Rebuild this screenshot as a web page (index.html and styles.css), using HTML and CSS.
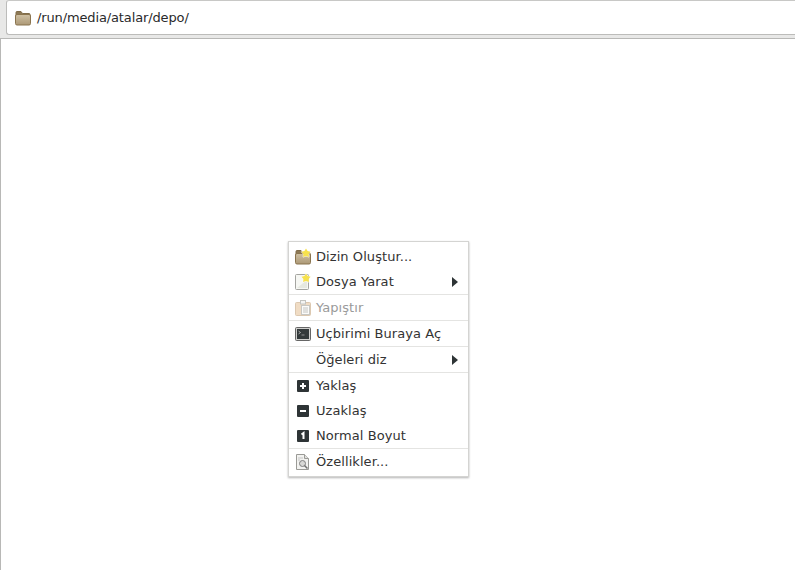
FILE: index.html
```html
<!DOCTYPE html>
<html lang="tr">
<head>
<meta charset="utf-8">
<title>depo</title>
<link rel="stylesheet" href="styles.css">
</head>
<body>
<svg class="defs" width="0" height="0" aria-hidden="true">
  <defs>
    <linearGradient id="folder" x1="0" y1="0" x2="0" y2="1">
      <stop offset="0" stop-color="#cfc1a4"/><stop offset="1" stop-color="#ac9876"/>
    </linearGradient>
    <g id="folder-icon">
      <path d="M1 5V2.5a1 1 0 0 1 1-1h4l1.5 2h6.5a1 1 0 0 1 1 1V6H1z" fill="#8c7855" stroke="#806c4a"/>
      <rect x="0.5" y="4.5" width="15" height="10.5" rx="1.5" fill="url(#folder)" stroke="#8a744e"/>
    </g>
    <g id="star"><path d="M5 .5l1.6 2.6 3 .7-2 2.3.3 3L5 8 2.1 9.1l.3-3-2-2.3 3-.7z" fill="#f7e24e" stroke="#fff" stroke-width=".8" paint-order="stroke"/></g>
  </defs>
</svg>
<header class="location-bar">
  <div class="location-field">
    <svg class="folder" width="16" height="16" viewBox="0 0 16 16"><use href="#folder-icon"/></svg>
    <span class="path">/run/media/atalar/depo/</span>
  </div>
</header>
<main class="file-view">
  <ul class="menu">
    <li class="item">
      <svg class="icon" width="16" height="16" viewBox="0 0 16 16"><use href="#folder-icon"/><use href="#star" x="6" y="-1"/></svg>
      <span>Dizin Oluştur...</span>
    </li>
    <li class="item">
      <svg class="icon" width="16" height="16" viewBox="0 0 16 16"><rect x="0.5" y="0.5" width="13" height="15" rx="1" fill="#f6f7f3" stroke="#a4a4a0"/><path d="M2 14h10V6z" fill="#e6e8e0"/><use href="#star" x="6" y="-1"/></svg>
      <span>Dosya Yarat</span><i class="arrow"></i>
    </li>
    <li class="sep"></li>
    <li class="item disabled">
      <svg class="icon" width="16" height="16" viewBox="0 0 16 16"><rect x="0.5" y="2.5" width="15" height="13" rx="1" fill="#f0dcc4" stroke="#dcc8b0"/><rect x="5.5" y="0.5" width="5" height="3.5" fill="#f4f4f2" stroke="#c4c4c0"/><rect x="6.5" y="5.5" width="8" height="9" fill="#fbfbfa" stroke="#c8c8c4"/><path d="M8 8h5M8 10h5M8 12h5" stroke="#c4c4c0"/></svg>
      <span>Yapıştır</span>
    </li>
    <li class="sep"></li>
    <li class="item">
      <svg class="icon" width="16" height="16" viewBox="0 0 16 16"><rect x="0.5" y="1.5" width="15" height="13" rx="1" fill="#cfcfcd" stroke="#666"/><rect x="2" y="3" width="12" height="10" fill="#33393a"/><path d="M3.5 5l2 1.5-2 1.5" fill="none" stroke="#c8c8c8" stroke-width=".8"/><path d="M6.5 9h3" stroke="#909090"/></svg>
      <span>Uçbirimi Buraya Aç</span>
    </li>
    <li class="sep"></li>
    <li class="item">
      <span class="icon"></span>
      <span>Öğeleri diz</span><i class="arrow"></i>
    </li>
    <li class="sep"></li>
    <li class="item">
      <svg class="icon" width="16" height="16" viewBox="0 0 16 16"><rect x="2" y="2" width="12" height="12" rx="1" fill="#2e3436"/><path d="M5 8h6M8 5v6" stroke="#fff" stroke-width="2"/></svg>
      <span>Yaklaş</span>
    </li>
    <li class="item">
      <svg class="icon" width="16" height="16" viewBox="0 0 16 16"><rect x="2" y="2" width="12" height="12" rx="1" fill="#2e3436"/><path d="M5 8h6" stroke="#fff" stroke-width="2"/></svg>
      <span>Uzaklaş</span>
    </li>
    <li class="item">
      <svg class="icon" width="16" height="16" viewBox="0 0 16 16"><rect x="2" y="2" width="12" height="12" rx="1" fill="#2e3436"/><path d="M6.5 6.5L8.5 5v6" fill="none" stroke="#fff" stroke-width="2"/></svg>
      <span>Normal Boyut</span>
    </li>
    <li class="sep"></li>
    <li class="item">
      <svg class="icon" width="16" height="16" viewBox="0 0 16 16"><path d="M1.5.5h8l4 4v11h-12z" fill="#f2f2f0" stroke="#9a9a96"/><path d="M9.5.5v4h4" fill="#e0e0de" stroke="#9a9a96"/><circle cx="7.5" cy="9.5" r="3" fill="#d8d8d6" stroke="#808080"/><path d="M9.5 11.5l3 3" stroke="#707070" stroke-width="1.5"/><path d="M3 4h5M3 6h2" stroke="#c4c4c4"/></svg>
      <span>Özellikler...</span>
    </li>
  </ul>
</main>
</body>
</html>
```

FILE: styles.css
```css
* { box-sizing: border-box; }
html, body { margin: 0; height: 100%; }
body {
  display: flex;
  flex-direction: column;
  background: #e8e8e7;
  font: 13px "DejaVu Sans", sans-serif;
  color: #333;
  overflow: hidden;
}
.defs { position: absolute; }
.location-bar {
  height: 38px;
  padding: 0 0 3px 6px;
  flex: none;
}
.location-field {
  height: 35px;
  display: flex;
  align-items: center;
  gap: 6px;
  padding-left: 8px;
  background: #fff;
  border: 1px solid #bcbcba;
  border-right: 0;
  border-top-color: #c8c8c6;
  border-radius: 3px 0 0 3px;
  color: #2a2a2a;
}
.path { letter-spacing: -.13px; }
.folder { flex: none; }
.file-view {
  flex: 1;
  position: relative;
  background: #fff;
  border-top: 1px solid #b8b8b6;
  border-left: 1px solid #b8b8b6;
}
.menu {
  position: absolute;
  left: 287px;
  top: 202px;
  width: 181px;
  margin: 0;
  padding: 2px 0;
  list-style: none;
  background: #fff;
  border: 1px solid #d4d4d2;
  box-shadow: 0 1px 2px rgba(0, 0, 0, .3);
}
.item {
  height: 25px;
  display: flex;
  align-items: center;
  gap: 2px;
  padding: 0 10px 0 6px;
  letter-spacing: .07px;
}
.icon { flex: none; width: 16px; height: 16px; margin-right: 3px; overflow: visible; }
.arrow {
  margin-left: auto;
  width: 0;
  height: 0;
  border-left: 6px solid #2e3436;
  border-top: 5px solid transparent;
  border-bottom: 5px solid transparent;
}
.sep { height: 1px; background: #e4e4e2; }
.disabled { color: #9a9a9a; }
```
